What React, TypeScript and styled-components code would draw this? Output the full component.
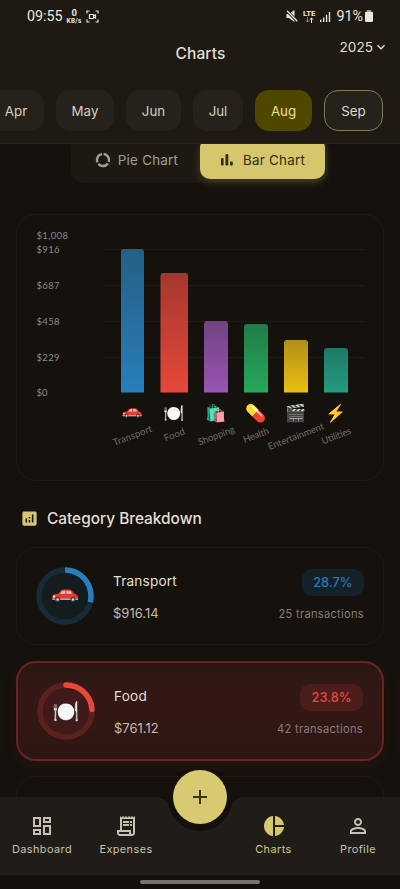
import React from "react";
import styled, { createGlobalStyle, css } from "styled-components";
import {
  MdAdd,
  MdAnalytics,
  MdKeyboardArrowDown,
  MdOutlineDashboard,
  MdOutlineReceiptLong,
  MdPersonOutline,
  MdPieChart,
} from "react-icons/md";

const GlobalStyle = createGlobalStyle`
  * { box-sizing: border-box; }
  body { margin: 0; background: #15110d; font-family: Inter, "Liberation Sans", sans-serif; }
`;

const Screen = styled.div`
  width: 400px;
  height: 889px;
  display: flex;
  flex-direction: column;
  overflow: hidden;
  background: #15110d;
  color: #e4dfd5;
`;

const Header = styled.header`
  flex: none;
  height: 144px;
  background: #1e1a13;
  border-bottom: 1px solid #2a261e;
  overflow: hidden;
`;

const StatusBar = styled.div`
  height: 32px;
  padding: 0 27px 0 27px;
  display: flex;
  align-items: center;
  justify-content: space-between;
  font-family: Roboto, sans-serif;
  font-size: 14.3px;
  color: #e9e6dc;
`;

const StatusGroup = styled.div<{ $gap: number }>`
  display: flex;
  align-items: center;
  gap: ${(p) => p.$gap}px;
  svg { display: block; }
`;

const NetSpeed = styled.div`
  display: flex;
  flex-direction: column;
  align-items: center;
  padding-top: 1px;
  font-weight: 700;
  font-size: 9.5px;
  line-height: 10px;
  small { font-size: 6.4px; line-height: 7px; letter-spacing: 0.3px; }
`;

const Lte = styled.div`
  display: flex;
  flex-direction: column;
  align-items: center;
  font-weight: 700;
  font-size: 7.8px;
  line-height: 7px;
`;

const TitleBar = styled.div`
  height: 58px;
  display: grid;
  grid-template-columns: 1fr auto 1fr;
  padding: 0 11px 0 12px;
`;

const Title = styled.h1`
  grid-column: 2;
  margin: 12px 0 0;
  font-size: 15.5px;
  line-height: 20px;
  font-weight: 550;
  letter-spacing: 0.15px;
`;

const YearPicker = styled.div`
  justify-self: end;
  margin-top: 5px;
  height: 20px;
  display: flex;
  align-items: center;
  font-size: 13.6px;
`;

const Months = styled.div`
  display: flex;
  margin-left: -12px;
  gap: 12px;
`;

const Month = styled.div<{ $width: number; $state?: "current" | "selected" }>`
  flex: none;
  width: ${(p) => p.$width}px;
  height: 41px;
  border-radius: 14px;
  display: flex;
  align-items: center;
  justify-content: center;
  font-size: 13.3px;
  color: #d4cfc5;
  background: #25221b;
  ${(p) => p.$state === "selected" && css`background: #4f4600; color: #eee08a;`}
  ${(p) => p.$state === "current" && css`border: 1.5px solid #7f7a4f; color: #ded9cf;`}
`;

const Content = styled.main`
  flex: 1;
  min-height: 0;
  overflow: hidden;
  padding: 0 16px;
  display: flex;
  flex-direction: column;
`;

const Toggle = styled.div`
  flex: none;
  align-self: center;
  width: 257px;
  height: 49px;
  margin: -10px 1px 31px 0;
  padding: 4px 3px 4px 4px;
  display: flex;
  border-radius: 13px;
  background: #1c1913;
`;

const ToggleOption = styled.div<{ $active?: boolean }>`
  flex: 1;
  display: flex;
  align-items: center;
  justify-content: center;
  gap: 7px;
  padding: 3px 2px 0 0;
  border-radius: 10px;
  font-size: 13.4px;
  letter-spacing: 0.25px;
  color: #a29e96;
  ${(p) => p.$active && css`
    background: #d6c76e;
    color: #332d0d;
    box-shadow: 0 3px 9px rgba(214, 199, 110, 0.22);
  `}
`;

const ChartCard = styled.section`
  flex: none;
  height: 267px;
  border: 1px solid #1f1c17;
  border-radius: 20px;
  svg { display: block; margin: -1px; }
`;

const AxisText = styled.text`
  font-family: Lato, sans-serif;
  font-size: 9.5px;
  fill: #8d8981;
`;

const SlantedText = styled(AxisText)`
  fill: #726e68;
`;

const EmojiText = styled.text<{ $size: number }>`
  font-family: "Noto Color Emoji", sans-serif;
  font-size: ${(p) => p.$size}px;
`;

const SectionTitle = styled.h2`
  flex: none;
  height: 66px;
  margin: 0;
  padding: 9px 0 0 4px;
  display: flex;
  align-items: center;
  gap: 8px;
  font-size: 15.4px;
  font-weight: 550;
  svg { color: #d6c76e; }
`;

const CategoryCard = styled.article<{ $highlight?: boolean }>`
  flex: none;
  height: 98px;
  margin-bottom: 16px;
  padding: 0 19px;
  display: flex;
  align-items: center;
  border: 1px solid #1e1b16;
  border-radius: 20px;
  ${(p) => p.$highlight && css`
    height: 100px;
    margin-bottom: 15px;
    border: 2px solid #6b2422;
    background: linear-gradient(#2a1812, #331815 30%, #301613);
    box-shadow: 0 4px 14px rgba(150, 50, 30, 0.14);
  `}
`;

const Ring = styled.svg`
  flex: none;
  width: 58px;
  height: 58px;
`;

const Info = styled.div`
  margin: 2px 0 0 19px;
  flex: 1;
  display: flex;
  flex-direction: column;
  gap: 12px;
`;

const Name = styled.div`
  font-size: 13.6px;
  line-height: 20px;
  letter-spacing: 0.2px;
`;

const Amount = styled.div`
  font-size: 13px;
  line-height: 20px;
  color: #c3bcb4;
`;

const Stats = styled.div`
  display: flex;
  flex-direction: column;
  align-items: flex-end;
  gap: 9px;
  margin-top: -1px;
`;

const Percent = styled.div<{ $color: string; $bg: string }>`
  height: 27px;
  padding: 0 11.5px;
  display: flex;
  align-items: center;
  border-radius: 10px;
  background: ${(p) => p.$bg};
  color: ${(p) => p.$color};
  font-size: 12.8px;
  font-weight: 550;
`;

const Count = styled.div`
  font-size: 11.1px;
  line-height: 18px;
  letter-spacing: 0.3px;
  color: #857e78;
`;

const Nav = styled.nav`
  flex: none;
  position: relative;
  height: 78px;
  padding-top: 17px;
  display: grid;
  grid-template-columns: 84px 84px 63px 85px 84px;
  background: #201d18;
`;

const NavItem = styled.div<{ $active?: boolean }>`
  display: flex;
  flex-direction: column;
  align-items: center;
  gap: 4px;
  font-size: 10.9px;
  line-height: 14px;
  letter-spacing: 0.42px;
  color: ${(p) => (p.$active ? "#d6c76e" : "#c6c1b4")};
  svg { flex: none; }
`;

const Notch = styled.svg`
  position: absolute;
  left: 148px;
  top: 0;
`;

const Fab = styled.div`
  position: absolute;
  left: 173px;
  top: -27px;
  width: 54px;
  height: 54px;
  border-radius: 50%;
  background: #d8ca72;
  color: #3a3310;
  display: flex;
  align-items: center;
  justify-content: center;
`;

const GestureBar = styled.div`
  flex: none;
  height: 14px;
  display: flex;
  justify-content: center;
  align-items: center;
  background: #13100b;
  &::after {
    content: "";
    width: 120px;
    height: 4px;
    border-radius: 2px;
    background: #75736f;
  }
`;

const bars = [
  { name: "Transport", icon: "🚗", x: 121, w: 23, top: 249, color: "#287fbb", dark: "#255f86", lx: 114.5, ly: 446, len: 41 },
  { name: "Food", icon: "🍽️", x: 160.5, w: 27.5, top: 273, color: "#e7483a", dark: "#a5372e", lx: 165.5, ly: 441.5, len: 21.5 },
  { name: "Shopping", icon: "🛍️", x: 204, w: 24, top: 321, color: "#9955b4", dark: "#714283", lx: 199.5, ly: 445.5, len: 38.5 },
  { name: "Health", icon: "💊", x: 244, w: 24, top: 324, color: "#26a85d", dark: "#227c48", lx: 244.5, ly: 443, len: 27 },
  { name: "Entertainment", icon: "🎬", x: 284, w: 24, top: 340, color: "#ecc012", dark: "#b08f18", lx: 269.5, ly: 450, len: 59 },
  { name: "Utilities", icon: "⚡", x: 324, w: 24, top: 348, color: "#249b82", dark: "#1e7965", lx: 323, ly: 444.5, len: 31 },
];

const ticks = [
  { label: "$1,008", y: 235, len: 31.5 },
  { label: "$916", y: 249, len: 23 },
  { label: "$687", y: 285, len: 23 },
  { label: "$458", y: 321, len: 23 },
  { label: "$229", y: 357, len: 23 },
  { label: "$0", y: 392.5, len: 11 },
];

/* Red saloon car seen from the side, in a 28x14 box. */
function Car({ x, y, width }: { x: number; y: number; width: number }) {
  return (
    <svg x={x} y={y} width={width} height={width / 2} viewBox="0 0 28 14">
      <path d="M1 10.500V7.500C1 6 4 5 7 4.800L10 1.300Q11 .5 13 .5H18Q20 .5 21 1.500L23.500 4.800C26 5 27.500 6.500 27.500 8.500V10.500Q27.500 11.500 26 11.500H2Q1 11.500 1 10.500Z" fill="#e23b32" />
      <path d="M8.800 4.800L11 2.200Q11.600 1.700 12.500 1.700H14.300V4.800ZM15.500 1.700H18Q19.300 1.700 20 2.700L21.300 4.800H15.500Z" fill="#d9c5c2" />
      <path d="M1 9.800H27.500V11.500H2Q1 11.500 1 10.800Z" fill="#a7abb0" />
      <circle cx="2.600" cy="7.800" r="1.300" fill="#f3dc7c" />
      <circle cx="6.300" cy="10.800" r="2.700" fill="#3c4248" />
      <circle cx="22.300" cy="10.800" r="2.700" fill="#3c4248" />
      <circle cx="6.300" cy="10.800" r="1.300" fill="#d2d5d8" />
      <circle cx="22.300" cy="10.800" r="1.300" fill="#d2d5d8" />
    </svg>
  );
}

function BarChart() {
  return (
    <svg width="368" height="267" viewBox="16 214 368 267">
      <defs>
        {bars.map((b) => (
          <linearGradient key={b.name} id={`bar-${b.name}`} x1="0" y1="0" x2="0" y2="1">
            <stop offset="0" stopColor={b.dark} />
            <stop offset="1" stopColor={b.color} />
          </linearGradient>
        ))}
      </defs>
      {ticks.slice(1, 5).map((t) => (
        <path key={t.y} d={`M105 ${t.y + 0.5}H364`} stroke="#1f1c17" />
      ))}
      {ticks.map((t) => (
        <AxisText key={t.label} x="36.5" y={t.y + 3.5} textLength={t.len}>{t.label}</AxisText>
      ))}
      {bars.map((b) => (
        <g key={b.name}>
          <path
            d={`M${b.x} 392.500V${b.top + 3}q0 -3 3 -3h${b.w - 6}q3 0 3 3V392.500z`}
            fill={`url(#bar-${b.name})`}
          />
          {b.name === "Transport" ? (
            <Car x={122} y={408} width={20} />
          ) : (
            <EmojiText $size={17} x={b.x + b.w / 2} y="419" textAnchor="middle">{b.icon}</EmojiText>
          )}
          <SlantedText x={b.lx} y={b.ly} textLength={b.len} transform={`rotate(-21 ${b.lx} ${b.ly})`}>
            {b.name}
          </SlantedText>
        </g>
      ))}
    </svg>
  );
}

interface RingProps {
  color: string;
  track: string;
  fill: string;
  share: number;
  round?: boolean;
  children: React.ReactNode;
}

function CategoryRing({ color, track, fill, share, round, children }: RingProps) {
  const length = 2 * Math.PI * 26;
  return (
    <Ring viewBox="0 0 58 58">
      <circle cx="29" cy="29" r="26" fill={fill} stroke={track} strokeWidth="5.5" />
      <circle
        cx="29" cy="29" r="26" fill="none" stroke={color} strokeWidth="5.5"
        strokeLinecap={round ? "round" : "butt"}
        strokeDasharray={`${length * share} ${length}`} transform="rotate(-90 29 29)"
      />
      {children}
    </Ring>
  );
}

export default function App() {
  return (
    <Screen>
      <GlobalStyle />
      <Header>
        <StatusBar>
          <StatusGroup $gap={4}>
            <span>09:55</span>
            <NetSpeed><span>0</span><small>KB/s</small></NetSpeed>
            <svg width="13" height="13" viewBox="0 0 13 13" fill="none" stroke="currentColor" strokeWidth="1.2">
              <path d="M1 3.500V1h2.500M9.500 1H12v2.500M12 9.500V12H9.500M3.500 12H1V9.500" />
              <path d="M3.500 4.500h4v4h-4zM7.500 6l2-1v3l-2-1" />
            </svg>
          </StatusGroup>
          <StatusGroup $gap={5}>
            <svg width="12" height="12" viewBox="0 0 12 12" fill="currentColor">
              <path d="M.5 4H3L8.500 0V12L3 8H.5z" />
              <path d="M.5 .5L11.500 11.500" stroke="#1e1a13" strokeWidth="3" />
              <path d="M1 .8L11.300 11.200" stroke="currentColor" strokeWidth="1.300" />
            </svg>
            <Lte>
              LTE
              <svg width="9" height="6" viewBox="0 0 9 6" fill="none" stroke="currentColor">
                <path d="M2.500 0v5M1 3.500l1.500 1.500L4 3.500" opacity=".5" />
                <path d="M6.500 6V1M4.800 2.700L6.500 1l1.700 1.700" />
              </svg>
            </Lte>
            <svg width="11" height="11" viewBox="0 0 12 12" fill="currentColor">
              <path d="M0 9.500h1.500V12H0zM3.200 7h1.500v5H3.200zM6.400 4h1.500v8H6.400zM9.600 1h1.500v11H9.600z" />
            </svg>
            <StatusGroup $gap={2}>
              <span>91%</span>
              <svg width="8" height="12" viewBox="0 0 8 12" fill="currentColor">
                <path d="M2 0h4v1.500H2z" opacity=".6" />
                <rect y="1.500" width="8" height="10.500" rx="1.500" />
              </svg>
            </StatusGroup>
          </StatusGroup>
        </StatusBar>
        <TitleBar>
          <Title>Charts</Title>
          <YearPicker>2025<MdKeyboardArrowDown size={16} /></YearPicker>
        </TitleBar>
        <Months>
          <Month $width={56}>Apr</Month>
          <Month $width={58}>May</Month>
          <Month $width={55}>Jun</Month>
          <Month $width={50}>Jul</Month>
          <Month $width={57} $state="selected">Aug</Month>
          <Month $width={59} $state="current">Sep</Month>
        </Months>
      </Header>
      <Content>
        <Toggle>
          <ToggleOption>
            <svg width="16" height="16" viewBox="0 0 16 16" fill="none" stroke="currentColor" strokeWidth="2.400">
              <circle cx="8" cy="8" r="6" pathLength="90" strokeDasharray="26 4" transform="rotate(-84 8 8)" />
            </svg>
            Pie Chart
          </ToggleOption>
          <ToggleOption $active>
            <svg width="18" height="18" viewBox="0 0 18 18" fill="currentColor">
              <rect x="3" y="7" width="2.600" height="7.500" rx="1" />
              <rect x="7.500" y="3" width="2.800" height="11.500" rx="1" />
              <rect x="12" y="10.500" width="2.800" height="4" rx="1" />
            </svg>
            Bar Chart
          </ToggleOption>
        </Toggle>
        <ChartCard><BarChart /></ChartCard>
        <SectionTitle><MdAnalytics size={19} />Category Breakdown</SectionTitle>
        <CategoryCard>
          <CategoryRing color="#287fbb" track="#182a36" fill="#151c1e" share={0.287}>
            <Car x={15.500} y={22} width={27} />
          </CategoryRing>
          <Info><Name>Transport</Name><Amount>$916.14</Amount></Info>
          <Stats><Percent $color="#2878b4" $bg="#152129">28.7%</Percent><Count>25 transactions</Count></Stats>
        </CategoryCard>
        <CategoryCard $highlight>
          <CategoryRing color="#e7483a" track="#5d211d" fill="#40191a" share={0.238} round>
            <EmojiText $size={22} x="29" y="37" textAnchor="middle">🍽️</EmojiText>
          </CategoryRing>
          <Info><Name>Food</Name><Amount>$761.12</Amount></Info>
          <Stats><Percent $color="#e7483a" $bg="#4b1d1b">23.8%</Percent><Count>42 transactions</Count></Stats>
        </CategoryCard>
        <CategoryCard />
      </Content>
      <Nav>
        <NavItem><MdOutlineDashboard size={24} />Dashboard</NavItem>
        <NavItem><MdOutlineReceiptLong size={24} />Expenses</NavItem>
        <span />
        <NavItem $active><MdPieChart size={24} />Charts</NavItem>
        <NavItem><MdPersonOutline size={24} />Profile</NavItem>
        <Notch width="104" height="36" viewBox="0 0 104 36">
          <path d="M4 0C15 0 19 3 21 10A32 32 0 0 0 83 10C85 3 89 0 100 0Z" fill="#13100b" />
        </Notch>
        <Fab><MdAdd size={24} /></Fab>
      </Nav>
      <GestureBar />
    </Screen>
  );
}
